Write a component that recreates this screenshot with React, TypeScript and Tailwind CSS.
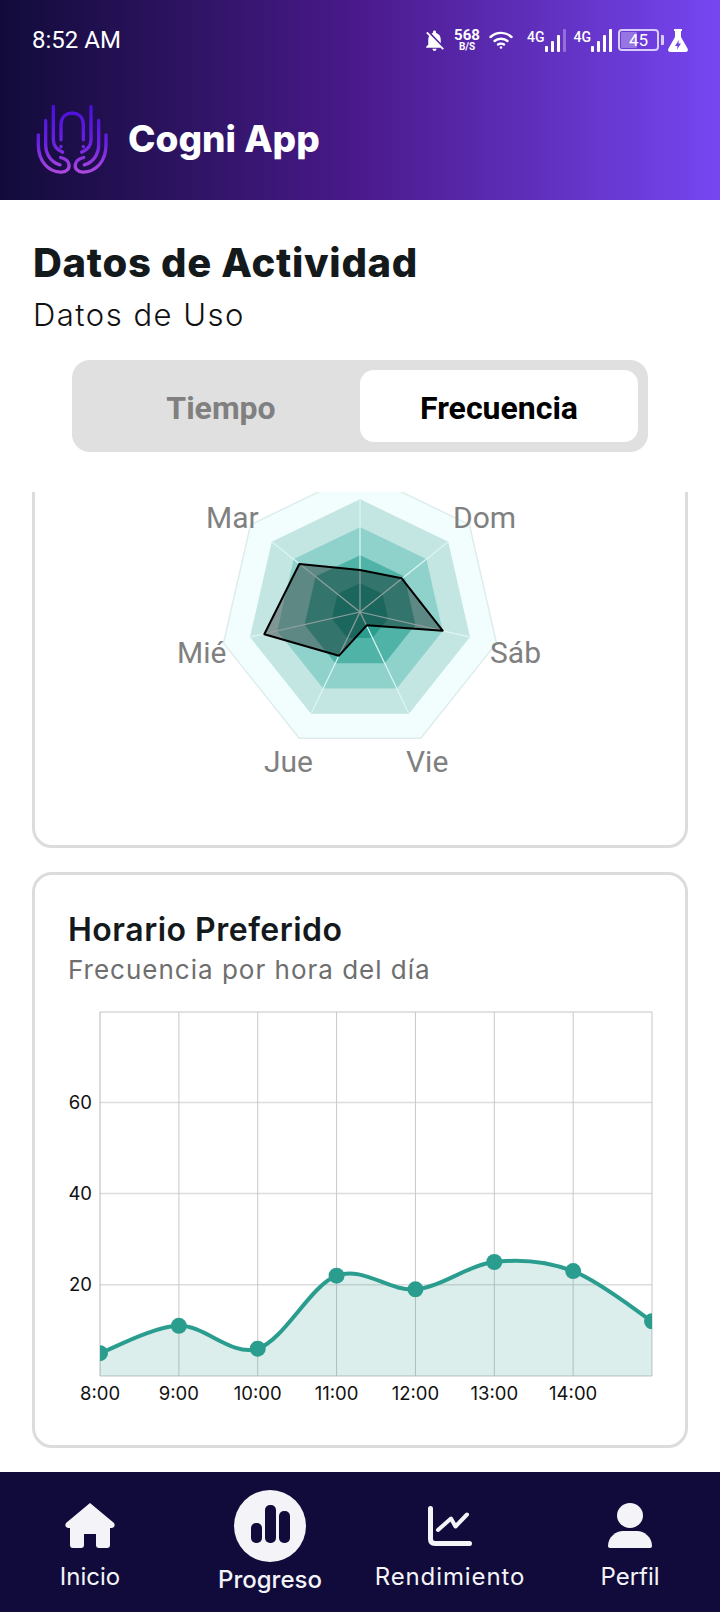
import { MdNotificationsOff } from 'react-icons/md'

const NAVY = '#100b3a'
const TEAL = '#2a9d8f'

// radar: centre and ring step read off the reference
const CX = 360
const CY = 612
const RINGS = [
  { r: 140, fill: '#f2fefe', stroke: '#dfecec' },
  { r: 112, fill: '#c3e6e3', stroke: '#c3e6e3' },
  { r: 84, fill: '#8fd1cb', stroke: '#8fd1cb' },
  { r: 56, fill: '#4fb3a7', stroke: '#4fb3a7' },
  { r: 28, fill: '#2a9d8f', stroke: '#2a9d8f' },
]
const RADAR_LABELS = [
  { text: 'Dom', x: 453, y: 528 },
  { text: 'Sáb', x: 490, y: 663 },
  { text: 'Vie', x: 406, y: 772 },
  { text: 'Jue', x: 264, y: 772 },
  { text: 'Mié', x: 177, y: 663 },
  { text: 'Mar', x: 206, y: 528 },
]
const RADAR_DATA = '360,570 401.7,578.3 442.7,630.7 366.7,625.3 339,655.7 264.3,634.3 299.3,564'

function vertex(r: number, i: number) {
  const a = (i * 2 * Math.PI) / 7 - Math.PI / 2
  return [CX + r * Math.cos(a), CY + r * Math.sin(a)]
}

function ringPoints(r: number) {
  return [0, 1, 2, 3, 4, 5, 6].map((i) => vertex(r, i).join(',')).join(' ')
}

// line chart
const HOURS = ['8:00', '9:00', '10:00', '11:00', '12:00', '13:00', '14:00']
const VALUES = [5, 11, 6, 22, 19, 25, 23, 12]
const X0 = 100
const XSTEP = 78.86
const Y0 = 1376
const YUNIT = 4.56

const pts = VALUES.map((v, i) => [X0 + i * XSTEP, Y0 - v * YUNIT])

function curve() {
  let d = `M${pts[0][0]} ${pts[0][1]}`
  for (let i = 0; i < pts.length - 1; i++) {
    const p0 = pts[Math.max(i - 1, 0)]
    const p1 = pts[i]
    const p2 = pts[i + 1]
    const p3 = pts[Math.min(i + 2, pts.length - 1)]
    const c1x = p1[0] + (p2[0] - p0[0]) / 6
    const c1y = p1[1] + (p2[1] - p0[1]) / 6
    const c2x = p2[0] - (p3[0] - p1[0]) / 6
    const c2y = p2[1] - (p3[1] - p1[1]) / 6
    d += ` C${c1x} ${c1y} ${c2x} ${c2y} ${p2[0]} ${p2[1]}`
  }
  return d
}

function Logo() {
  const side = (
    <g fill="none" stroke="url(#logoGrad)" strokeWidth="10" strokeLinecap="round">
      <path d="M55 135 V165 C55 215 85 245 122 247 C140 248 149 236 147 224 C145 212 135 206 122 203" />
      <path d="M77 92 V165 C77 195 95 218 120 225" />
      <path d="M100 50 V150 C100 168 110 180 128 187" />
      <path d="M123 150 V105 C123 82 137 70 156.5 70" />
      <path d="M123 170 V171" />
    </g>
  )
  return (
    <svg viewBox="45 40 225 215" className="w-[75px] h-[72px] shrink-0">
      <defs>
        <linearGradient id="logoGrad" gradientUnits="userSpaceOnUse" x1="0" y1="50" x2="0" y2="250">
          <stop offset="0" stopColor="#4a10d8" />
          <stop offset="0.55" stopColor="#6a20e0" />
          <stop offset="1" stopColor="#b04ae0" />
        </linearGradient>
      </defs>
      {side}
      <g transform="translate(313 0) scale(-1 1)">{side}</g>
    </svg>
  )
}

function Signal({ dim }: { dim?: boolean }) {
  return (
    <div className="flex items-start">
      <span className="font-['Roboto',sans-serif] font-medium text-[14px] leading-[14px] mt-[1px] text-white">4G</span>
      <svg viewBox="0 0 21 23" className="w-[21px] h-[23px]">
        <rect x="0" y="17" width="3" height="6" rx="1" fill="white" />
        <rect x="6" y="12" width="3" height="11" rx="1" fill="white" />
        <rect x="12" y="6" width="3" height="17" rx="1" fill="white" />
        <rect x="18" y="0" width="3" height="23" rx="1" fill="white" opacity={dim ? 0.3 : 1} />
      </svg>
    </div>
  )
}

function StatusIcons() {
  return (
    <div className="ml-auto flex items-center text-white">
      <MdNotificationsOff className="w-[25px] h-[25px] -mx-[3px]" />
      <div className="ml-[11px] w-[24px] flex flex-col items-center font-['Roboto',sans-serif] font-bold">
        <span className="text-[15px] leading-[14px]">568</span>
        <span className="text-[10px] leading-[10px]">B/S</span>
      </div>
      <svg viewBox="0 0 24 18" className="ml-[10px] w-[24px] h-[18px]" fill="none" stroke="white" strokeWidth="2.4" strokeLinecap="round">
        <path d="M1.5 6 C7.5 0.5 16.5 0.5 22.5 6" />
        <path d="M5.5 10 C9 7 15 7 18.5 10" />
        <path d="M9 13.5 C10.5 12.3 13.5 12.3 15 13.5" />
        <circle cx="12" cy="16.5" r="1.3" fill="white" stroke="none" />
      </svg>
      <div className="ml-[14px]">
        <Signal dim />
      </div>
      <div className="ml-[8px]">
        <Signal />
      </div>
      <div className="ml-[6px] flex items-center">
        <div className="relative w-[41px] h-[22px] rounded-[4px] border-2 border-[#d8cdf8] flex items-center justify-center">
          <div className="absolute left-[1px] top-[1px] bottom-[1px] w-[16px] bg-white/30 rounded-[1px]" />
          <span className="relative font-['Roboto',sans-serif] text-[17px] leading-none text-white">45</span>
        </div>
        <div className="ml-[2px] w-[3px] h-[10px] bg-[#d8cdf8] rounded-r-[1px]" />
      </div>
      <svg viewBox="0 0 20 23" className="ml-[4px] w-[20px] h-[23px]">
        <path
          fillRule="evenodd"
          fill="white"
          d="M6 0 H14 V2 H13 V8 L19.5 19.5 C20.5 21.5 19.5 23 17.5 23 H2.5 C0.5 23 -0.5 21.5 0.5 19.5 L7 8 V2 H6 Z M11 11 L7 17 H9.5 L9 20.5 L13 14.5 H10.5 Z"
        />
      </svg>
    </div>
  )
}

function Radar() {
  return (
    <svg viewBox="35 455 650 390" className="block w-[650px] h-[390px]">
      {RINGS.map((ring) => (
        <polygon key={ring.r} points={ringPoints(ring.r)} fill={ring.fill} stroke={ring.stroke} strokeWidth="1.5" />
      ))}
      {[0, 1, 2, 3, 4, 5, 6].map((i) => {
        const [x, y] = vertex(112, i)
        return <line key={i} x1={CX} y1={CY} x2={x} y2={y} stroke="#dcf6f3" strokeWidth="1.2" />
      })}
      <polygon points={RADAR_DATA} fill="rgba(0,0,0,0.35)" stroke="#000" strokeWidth="2" strokeLinejoin="round" />
      {RADAR_LABELS.map((l) => (
        <text key={l.text} x={l.x} y={l.y} fontSize="30" fill="#808080" fontFamily="Roboto, sans-serif">
          {l.text}
        </text>
      ))}
    </svg>
  )
}

function LineChart() {
  const d = curve()
  return (
    <svg viewBox="35 1000 650 420" className="block w-[650px] h-[420px]">
      <defs>
        <clipPath id="plotClip">
          <rect x={X0} y="1012" width="552" height="364" />
        </clipPath>
      </defs>
      {[60, 40, 20].map((v) => (
        <line key={v} x1={X0} x2="652" y1={Y0 - v * YUNIT} y2={Y0 - v * YUNIT} stroke="#dcdcdc" strokeWidth="1.5" />
      ))}
      <line x1={X0} x2="652" y1="1012" y2="1012" stroke="#c4c4c4" />
      {[0, 1, 2, 3, 4, 5, 6, 7].map((i) => (
        <line key={i} x1={X0 + i * XSTEP} x2={X0 + i * XSTEP} y1="1012" y2={Y0} stroke={i === 0 ? '#b8b8b8' : '#c8c8c8'} />
      ))}
      <line x1={X0} x2="652" y1={Y0} y2={Y0} stroke="#c4c4c4" />
      <g clipPath="url(#plotClip)">
        <path d={`${d} L652 ${Y0} L${X0} ${Y0} Z`} fill={TEAL} fillOpacity="0.17" />
        <path d={d} fill="none" stroke={TEAL} strokeWidth="4" />
        {pts.map((p) => (
          <circle key={p[0]} cx={p[0]} cy={p[1]} r="8" fill={TEAL} />
        ))}
      </g>
      {[60, 40, 20].map((v) => (
        <text key={v} x="92" y={Y0 - v * YUNIT + 6.5} textAnchor="end" fontSize="18.5" fill="#111" fontFamily="Inter, sans-serif">
          {v}
        </text>
      ))}
      {HOURS.map((h, i) => (
        <text key={h} x={X0 + i * XSTEP} y="1400" textAnchor="middle" fontSize="18.5" fill="#111" fontFamily="Inter, sans-serif">
          {h}
        </text>
      ))}
    </svg>
  )
}

function NavItem({ label, tracking, icon }: { label: string; tracking?: string; icon: React.ReactNode }) {
  return (
    <div className="w-[180px] flex flex-col items-center pt-[31px]">
      <div className="h-[45px] flex items-center justify-center">{icon}</div>
      <span className={`mt-[13px] font-['Inter',sans-serif] text-[24px] leading-[32px] text-[#f4f4f8] ${tracking ?? ''}`}>{label}</span>
    </div>
  )
}

export default function App() {
  return (
    <div className="w-[720px] h-[1612px] flex flex-col bg-white overflow-hidden">
      {/* header */}
      <div className="h-[200px] shrink-0 bg-gradient-to-r from-[#120b3a] via-[#4a1a8c] to-[#7646f2] pt-[28px]">
        <div className="flex items-center h-[24px] pl-[32px] pr-[32px]">
          <span className="font-['Roboto',sans-serif] text-[24px] leading-none text-white">8:52 AM</span>
          <StatusIcons />
        </div>
        <div className="mt-[51px] pl-[35px] flex items-center">
          <Logo />
          <span className="ml-[18px] font-['Inter',sans-serif] font-extrabold text-[37px] leading-[44px] text-white">Cogni App</span>
        </div>
      </div>

      {/* heading */}
      <div className="shrink-0 pt-[40px] pl-[33px]">
        <h1 className="font-['Inter',sans-serif] font-extrabold text-[40px] tracking-[0.7px] leading-[46px] text-[#14191c]">Datos de Actividad</h1>
        <p className="mt-[9px] font-['Inter',sans-serif] font-light text-[31px] tracking-[1.5px] leading-[40px] text-[#111]">Datos de Uso</p>
      </div>

      {/* tabs */}
      <div className="shrink-0 mt-[25px] mx-[72px] h-[92px] rounded-[18px] bg-[#e0e0e0] flex items-center">
        <div className="w-[288px] pl-[10px] pt-[3px] text-center font-['Roboto',sans-serif] font-bold text-[32px] text-[#808080]">Tiempo</div>
        <div className="w-[278px] h-[72px] pt-[3px] rounded-[14px] bg-white flex items-center justify-center font-['Roboto',sans-serif] font-bold text-[32px] text-black">
          Frecuencia
        </div>
      </div>

      {/* scrolled content, first card is partly above the fold */}
      <div className="flex-1 min-h-0 mt-[40px] overflow-hidden px-[32px]">
        <div className="-mt-[40px] h-[396px] rounded-[20px] border-[3px] border-[#dcdcdc] bg-white">
          <Radar />
        </div>
        <div className="mt-[24px] h-[576px] rounded-[20px] border-[3px] border-[#dcdcdc] bg-white">
          <div className="pt-[37px] pl-[33px]">
            <h2 className="font-['Inter',sans-serif] font-semibold text-[32px] tracking-[0.5px] leading-[36px] text-[#14191c]">Horario Preferido</h2>
            <p className="mt-[6px] font-['Inter',sans-serif] text-[26px] tracking-[1px] leading-[32px] text-[#6e6e6e]">Frecuencia por hora del día</p>
          </div>
          <div className="mt-[14px]">
            <LineChart />
          </div>
        </div>
      </div>

      {/* bottom nav */}
      <div className="shrink-0 h-[140px] flex" style={{ background: NAVY }}>
        <NavItem
          label="Inicio"
          icon={
            <svg viewBox="-1 -1 52 47" className="w-[52px] h-[47px]" fill="#f4f4f8">
              <path d="M25 0 L49 20 Q51 24 47 25 H45 V42 Q45 45 42 45 H34 Q31 45 31 42 V31 H19 V42 Q19 45 16 45 H8 Q5 45 5 42 V25 H3 Q-1 24 1 20 Z" />
            </svg>
          }
        />
        <div className="w-[180px] flex flex-col items-center pt-[18px]">
          <div className="w-[72px] h-[72px] rounded-full bg-[#f4f4f8] flex items-end justify-center gap-[3px] pb-[19px]">
            <div className="w-[11px] h-[20px] rounded-[5px]" style={{ background: NAVY }} />
            <div className="w-[11px] h-[38px] rounded-[5px]" style={{ background: NAVY }} />
            <div className="w-[11px] h-[32px] rounded-[5px]" style={{ background: NAVY }} />
          </div>
          <span className="mt-[2px] font-['Inter',sans-serif] font-medium text-[24px] leading-[32px] text-[#f4f4f8]">Progreso</span>
        </div>
        <NavItem
          label="Rendimiento"
          tracking="tracking-[0.9px]"
          icon={
            <svg viewBox="0 0 44 40" className="w-[44px] h-[40px]" fill="none" stroke="#f4f4f8" strokeLinecap="round" strokeLinejoin="round">
              <path d="M2.5 2.5 V33 Q2.5 37.5 7 37.5 H41.5" strokeWidth="5" />
              <path d="M10 24 L23 12.5 L27.5 20.5 L39 8.5" strokeWidth="4" />
            </svg>
          }
        />
        <NavItem
          label="Perfil"
          icon={
            <svg viewBox="0 0 44 45" className="w-[44px] h-[45px]" fill="#f4f4f8">
              <ellipse cx="22" cy="12.5" rx="13" ry="12.5" />
              <path d="M0 43 C0 34 8 28 15 28 H29 C36 28 44 34 44 43 Q44 45 42 45 H2 Q0 45 0 43 Z" />
            </svg>
          }
        />
      </div>
    </div>
  )
}
